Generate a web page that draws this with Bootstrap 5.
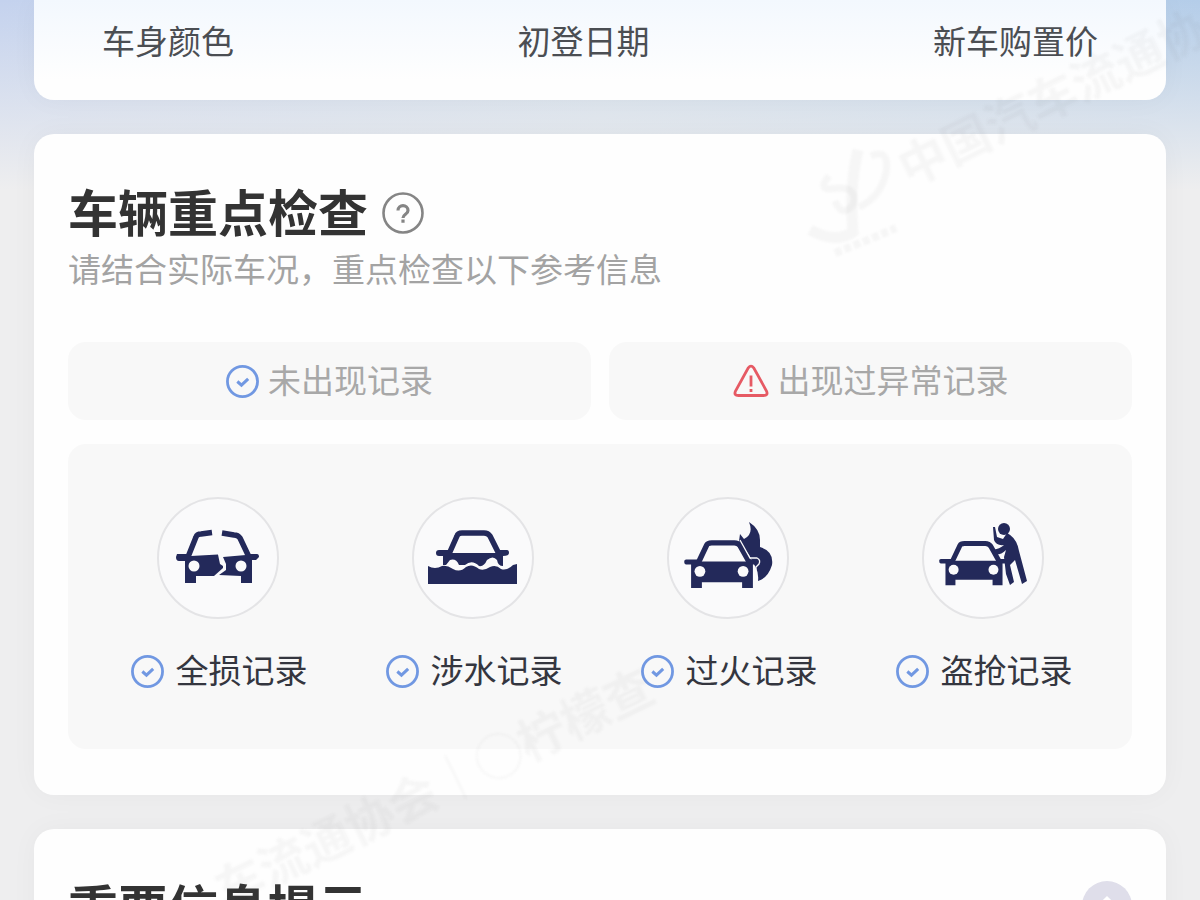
<!DOCTYPE html>
<html lang="zh-CN">
<head>
<meta charset="utf-8">
<meta name="viewport" content="width=device-width, initial-scale=1">
<title>车辆重点检查</title>
<link rel="stylesheet" href="https://cdn.jsdelivr.net/npm/bootstrap@5.3.0/dist/css/bootstrap.min.css">
<script src="https://cdn.jsdelivr.net/npm/bootstrap@5.3.0/dist/js/bootstrap.bundle.min.js"></script>
<style>
body{font-family:"Noto Sans CJK SC",sans-serif;font-size:33px;line-height:48px;color:#4b4e53;
 background:linear-gradient(rgba(238,238,239,0),#eeeeef 190px),linear-gradient(90deg,#c4d2ee,#c9d9ea 50%,#b4cde9)}
.report{height:100vh;gap:34px;padding:0 34px}
.panel{border:0;border-radius:20px;box-shadow:0 0 28px rgba(0,0,0,.035);flex:none;padding:43px 34px 46px;background:#fefefe}
.summary{border-radius:0 0 20px 20px;padding:16px 68px 36px;background:linear-gradient(#f3f8fe,#fefefe 80px)}
.heading{font-size:50px;line-height:67px;font-weight:700;color:#333}
.sub{color:#a3a3a3}
.tile{background:#f8f8f8;border-radius:18px}
.legend-tile{height:78px;gap:9px;color:#a8a8a8}
.legend-tile span,.status span{padding-bottom:5px}
.legends{gap:18px;margin-top:50px}
.checks{margin-top:24px;padding:53px 22px 51px}
.ring{width:122px;height:122px;border:2px solid #e4e4e6;border-radius:50%;background:#fafafb}
.ring svg{width:118px;height:118px;display:block}
.status{gap:12px;margin-top:26px;padding-left:3px;color:#34363f}
.icon-ok{width:33px;height:33px;flex:none}
.icon-warn{width:36px;height:34px;flex:none}
.title-row{gap:14px}
.help{width:42px;height:42px}
.fold{width:50px;height:50px;background:#dfdeea;border:0}
.wm{position:absolute;white-space:nowrap;font-size:48px;line-height:60px;font-weight:700;color:rgba(90,90,90,.05);transform:rotate(-26deg);transform-origin:0 50%;filter:blur(1px)}
.wm-a{left:calc(50% + 300px);top:138px}
.wm-b{left:calc(50% - 383px);top:860px}
.wm-logo{position:absolute;left:calc(50% + 206px);top:145px;width:130px;height:124px;filter:blur(1px)}
</style>
</head>
<body>
<svg class="d-none" aria-hidden="true">
 <symbol id="ok" viewBox="0 0 32 32"><circle cx="16" cy="16" r="14.600" fill="none" stroke="#7198e2" stroke-width="2.700"/><path d="M11 16l4 3.500 6.500-6" fill="none" stroke="#7198e2" stroke-width="3"/></symbol>
 <symbol id="car" viewBox="0 0 77 53"><path fill="none" stroke="#23295a" stroke-width="5.500" stroke-linejoin="round" d="M14 26L23 7Q24 5 28 5H51Q55 5 57 8L67 26"/><path fill="#23295a" d="M2 22H15V24H64V22H75Q77 22 77 24Q77 27 72 27H70V51H59V45H18V51H7V27H2Q0 27 0 24Q0 22 2 22Z"/><g fill="#fafafb"><circle cx="16" cy="34" r="5.500"/><circle cx="60" cy="34" r="5.500"/></g></symbol>
</svg>
<main class="report d-flex flex-column position-relative overflow-hidden">
 <section class="panel summary d-flex justify-content-between">
  <span>车身颜色</span><span>初登日期</span><span>新车购置价</span>
 </section>
 <section class="panel">
  <div class="d-flex align-items-center title-row">
   <h1 class="heading m-0">车辆重点检查</h1>
   <button type="button" class="btn p-0 pt-1 border-0 d-flex" aria-label="说明">
    <svg class="help" viewBox="0 0 42 42" fill="none" stroke="#858585"><circle cx="21" cy="21" r="19.500" stroke-width="2.600"/><path stroke-width="3.200" d="M16 18.500c0-6.500 10-6.500 10 0 0 4-5 3.500-5 7.500M21 27.500v3.300"/></svg>
   </button>
  </div>
  <p class="sub m-0">请结合实际车况，重点检查以下参考信息</p>
  <div class="legends d-flex">
   <div class="tile legend-tile d-flex flex-fill w-50 align-items-center justify-content-center"><svg class="icon-ok"><use href="#ok"/></svg><span>未出现记录</span></div>
   <div class="tile legend-tile d-flex flex-fill w-50 align-items-center justify-content-center">
    <svg class="icon-warn" viewBox="0 0 36 34" fill="none" stroke="#e65a64" stroke-width="2.800"><path d="M15.300 3.800Q18 .5 20.700 3.800L33.500 27Q35.500 31.500 30.500 31.500H5.500Q.5 31.500 2.500 27Z"/><path d="M18 11.500v11M18 25v3"/></svg><span>出现过异常记录</span></div>
  </div>
  <div class="tile checks d-flex">
   <div class="flex-fill w-25 d-flex flex-column align-items-center">
    <div class="ring"><svg viewBox="0 0 118 118"><path fill="none" stroke="#23295a" stroke-width="5.500" stroke-linejoin="round" d="M29 58L37 38Q38 35 42 35L53 33.500M63 34L75 36Q79 36 81 39L90 58"/><path fill="#23295a" d="M18 55H32V57L59 55.500L61 65L64 67V69L55 77H37V84H26V62H20Q17 62 17 58ZM64 58L87 56V55H98Q100 55 100 58L97 61H93V84H82V77L60 76L67 71V65Z"/><g fill="#fafafb"><circle cx="35" cy="67" r="5.500"/><circle cx="82" cy="67" r="5.500"/></g></svg></div>
    <div class="status d-flex align-items-center"><svg class="icon-ok"><use href="#ok"/></svg><span>全损记录</span></div>
   </div>
   <div class="flex-fill w-25 d-flex flex-column align-items-center">
    <div class="ring"><svg viewBox="0 1 118 118"><g transform="translate(-1 2)"><path fill="none" stroke="#23295a" stroke-width="5.500" stroke-linejoin="round" d="M36 54L44 36Q45 33 49 33H71Q75 33 77 36L86 54"/><path fill="#23295a" d="M26 50H37V53H84V50H94Q96 50 96 53Q96 56 90 56V66Q85 66 84 60Q80 55 74 60Q71 67 66 66Q59 59 52 65L46 65Q43 58 37 60L33 65H30V56H26Q23 56 23 53Q23 50 26 50ZM15 66Q22 70 29 66Q34 65 40 69Q47 73 53 67Q59 63 66 69Q71 71 77 67Q83 64 88 69Q94 71 100 65L104 64V84H15Z"/></g></svg></div>
    <div class="status d-flex align-items-center"><svg class="icon-ok"><use href="#ok"/></svg><span>涉水记录</span></div>
   </div>
   <div class="flex-fill w-25 d-flex flex-column align-items-center">
    <div class="ring"><svg viewBox="0 0 118 118"><path fill="#23295a" d="M70 42L71 35L75 40Q85 35 80 23Q91 30 91 41V48Q105 52 103 66Q99 79 89 82Q90 74 86 67L80 56Z"/><use href="#car" x="15" y="39" width="76" height="52"/><path d="M71 41L81 59H88Q92 61 90 65L87 68V80" fill="none" stroke="#fafafb" stroke-width="1.300"/></svg></div>
    <div class="status d-flex align-items-center"><svg class="icon-ok"><use href="#ok"/></svg><span>过火记录</span></div>
   </div>
   <div class="flex-fill w-25 d-flex flex-column align-items-center">
    <div class="ring"><svg viewBox="0 0 118 118"><use href="#car" x="15" y="40" width="70" height="48"/><g fill="#23295a"><circle cx="80" cy="30" r="6"/><path d="M83 34Q93 39 95 52L103 82L98 85L91 61L86 66L90 83L86 86L82 75L80 58L82 51Q76 57 69 55L68 51Q76 50 80 46Q72 47 70 41L69 28H71L73 38L79 40Z"/></g></svg></div>
    <div class="status d-flex align-items-center"><svg class="icon-ok"><use href="#ok"/></svg><span>盗抢记录</span></div>
   </div>
  </div>
 </section>
 <section class="panel d-flex justify-content-between align-items-center">
  <h2 class="heading m-0">重要信息提示</h2>
  <button type="button" class="fold rounded-circle p-0 d-flex align-items-center justify-content-center" aria-label="收起"><svg width="24" height="24" viewBox="0 0 24 24" fill="none" stroke="#fff" stroke-width="3"><path d="M4 12l8-8 8 8"/></svg></button>
 </section>
 <div class="wm wm-a pe-none" aria-hidden="true">中国汽车流通协</div>
 <div class="wm wm-b pe-none" aria-hidden="true">车流通协会｜◯柠檬查</div>
 <svg class="wm-logo pe-none" viewBox="0 0 130 124" fill="none" stroke="#5a5a5a" stroke-opacity=".05" aria-hidden="true"><path stroke-width="11" d="M52 5Q43 42 47 87Q30 99 4 85"/><path stroke-width="7" d="M23 31Q12 44 24 44Q53 39 47 60Q36 73 29 56M65 11Q84 3 80 28Q74 53 53 62"/><path stroke-width="8" stroke-dasharray="7 3" d="M29 108Q60 96 90 83"/></svg>
</main>
</body>
</html>
